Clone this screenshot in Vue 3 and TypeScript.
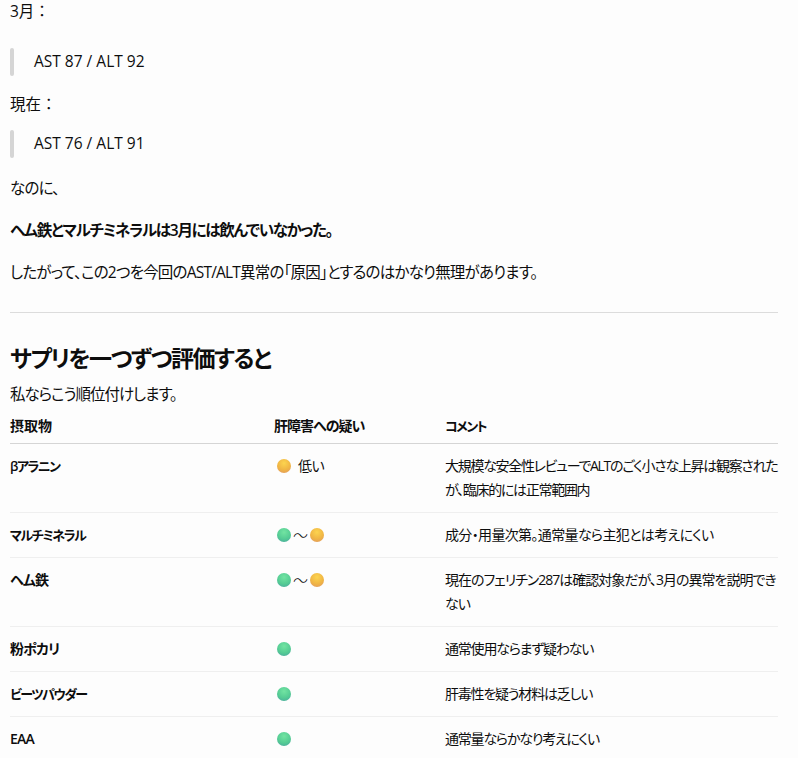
<template>
  <div class="doc">
    <p class="first wide">3月：</p>
    <blockquote class="quote-march">AST 87 / ALT 92</blockquote>
    <p class="wide">現在：</p>
    <blockquote class="quote-now">AST 76 / ALT 91</blockquote>
    <p>なのに、</p>
    <p><strong>ヘム鉄とマルチミネラルは3月には飲んでいなかった。</strong></p>
    <p>したがって、この2つを今回のAST/ALT異常の「原因」とするのはかなり無理があります。</p>
    <hr />
    <h2>サプリを一つずつ評価すると</h2>
    <p class="lead">私ならこう順位付けします。</p>
    <table>
      <thead>
        <tr>
          <th class="c1">摂取物</th>
          <th class="c2">肝障害への疑い</th>
          <th class="kana">コメント</th>
        </tr>
      </thead>
      <tbody>
        <tr v-for="row in rows" :key="row.name">
          <td class="name" :class="{ kana: row.kana }">{{ row.name }}</td>
          <td>
            <span class="risk">
              <template v-if="row.risk === 'low'">
                <i class="dot yellow"></i><span class="risk-label">低い</span>
              </template>
              <template v-else-if="row.risk === 'mid'">
                <i class="dot green"></i><span class="tilde">〜</span><i class="dot yellow"></i>
              </template>
              <i v-else class="dot green"></i>
            </span>
          </td>
          <td class="comment" :class="row.fit">{{ row.comment }}</td>
        </tr>
      </tbody>
    </table>
  </div>
</template>

<script setup lang="ts">
interface Row {
  name: string
  kana?: boolean
  risk: 'low' | 'mid' | 'none'
  comment: string
  fit?: 'longest' | 'long' | 'short'
}

const rows: Row[] = [
  { name: 'βアラニン', kana: true, risk: 'low', comment: '大規模な安全性レビューでALTのごく小さな上昇は観察されたが、臨床的には正常範囲内', fit: 'longest' },
  { name: 'マルチミネラル', kana: true, risk: 'mid', comment: '成分・用量次第。通常量なら主犯とは考えにくい' },
  { name: 'ヘム鉄', risk: 'mid', comment: '現在のフェリチン287は確認対象だが、3月の異常を説明できない', fit: 'long' },
  { name: '粉ポカリ', risk: 'none', comment: '通常使用ならまず疑わない', fit: 'short' },
  { name: 'ビーツパウダー', kana: true, risk: 'none', comment: '肝毒性を疑う材料は乏しい', fit: 'short' },
  { name: 'EAA', risk: 'none', comment: '通常量ならかなり考えにくい', fit: 'short' }
]
</script>

<style>
html,
body {
  background: #fdfdfd;
  overflow: hidden;
}
</style>

<style scoped>
.doc {
  margin-top: -3px;
  padding: 0 20px 0 10px;
  color: #0d0d0d;
  font-family: "Open Sans", "Noto Sans CJK JP", sans-serif;
  font-size: 15.5px;
  font-feature-settings: "palt";
  line-height: 28px;
}

p {
  margin: 14px 0;
  letter-spacing: -0.8px;
}

.wide {
  font-feature-settings: normal;
  letter-spacing: 0;
}

.first {
  margin-top: 0;
}

blockquote {
  margin: 0;
  padding-left: 24px;
  position: relative;
  height: 28px;
  line-height: 26px;
}

blockquote::before {
  content: "";
  position: absolute;
  left: 0;
  top: 0;
  bottom: 0;
  width: 4px;
  border-radius: 2px;
  background: #d5d5d5;
}

.quote-march {
  margin: 23px 0 14px;
}

.quote-now {
  margin: -2px 0 16px;
}

strong {
  font-weight: 600;
  letter-spacing: -1.3px;
}

hr {
  border: 0;
  border-top: 1px solid #dcdcdc;
  margin: 26px 0 0;
}

h2 {
  margin: 28px 0 0;
  font-size: 23px;
  line-height: 34px;
  font-weight: 600;
  letter-spacing: -1.5px;
}

.lead {
  margin: 5px 0 0;
  letter-spacing: -1px;
}

table {
  width: 100%;
  border-collapse: collapse;
  table-layout: fixed;
  font-size: 14px;
}

th {
  text-align: left;
  font-weight: 600;
  padding: 6px 0 5px;
  line-height: 24px;
  border-bottom: 1px solid #d5d5d5;
}

td {
  padding: 10px 0;
  line-height: 24px;
  vertical-align: top;
  border-bottom: 1px solid #efefef;
}

.c1 {
  width: 264px;
}

.c2 {
  width: 171px;
  letter-spacing: -1px;
}

.name {
  font-weight: 600;
  letter-spacing: -0.8px;
}

.kana {
  font-size: 13px;
  letter-spacing: -1.5px;
}

.comment {
  letter-spacing: -0.65px;
}

.longest {
  letter-spacing: -1.3px;
}

.long {
  letter-spacing: -1px;
}

.short {
  letter-spacing: -1.2px;
}

.risk {
  display: flex;
  align-items: center;
  height: 24px;
  padding-left: 3px;
}

.dot {
  display: block;
  width: 14px;
  height: 14px;
  border-radius: 50%;
  flex: none;
}

.yellow {
  background: radial-gradient(circle at 50% 30%, #fcd44f, #f0b544 55%, #dd9468);
}

.green {
  background: radial-gradient(circle at 50% 30%, #72e4a2, #55cc94 55%, #47a2a0);
}

.risk-label {
  margin-left: 7px;
  letter-spacing: -0.5px;
}

.tilde {
  width: 19px;
  text-align: center;
  font-size: 15px;
  font-weight: 300;
}
</style>
